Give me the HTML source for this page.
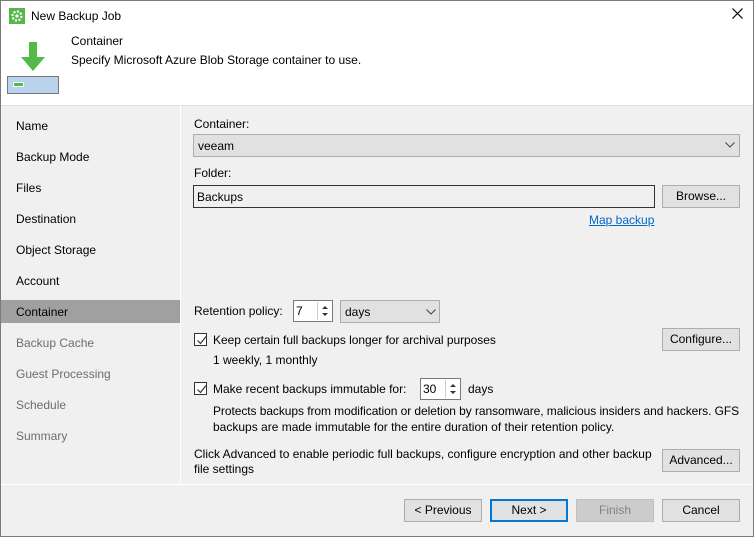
<!DOCTYPE html>
<html><head><style>
*{box-sizing:border-box;margin:0;padding:0}
body{width:754px;height:537px;overflow:hidden;font-family:"Liberation Sans",sans-serif;font-size:12px;color:#000;background:#f0f0f0;position:relative}
.win{position:absolute;left:0;top:0;width:754px;height:537px;border:1px solid #7a7a7a}
.a{position:absolute;white-space:nowrap}
.btn{position:absolute;background:#e1e1e1;border:1px solid #adadad;text-align:center;line-height:21px;height:23px}
.nav{position:absolute;left:16px;line-height:14px}
.g{color:#6d6d6d}
.cb{position:absolute;width:13px;height:13px;border:1px solid #333;background:#fff}
.cb svg{position:absolute;left:1px;top:1px}
.spin{position:absolute;background:#fff;border:1px solid #7a7a7a;height:22px}
.spin .arr{position:absolute;right:1px;top:1px;width:14px;height:18px;border-left:1px solid #ccc}
</style></head><body>
<div class="win"></div>
<div class="a" style="left:1px;top:1px;width:752px;height:104px;background:#fff"></div>
<svg class="a" style="left:9px;top:8px" width="16" height="16"><rect width="16" height="16" fill="#54b948"/><circle cx="8" cy="8" r="4.5" fill="none" stroke="#fff" stroke-width="2.2" stroke-dasharray="2 1.5"/><circle cx="8" cy="8" r="1.6" fill="#fff"/></svg>
<div class="a" style="left:31px;top:9px;font-size:12px">New Backup Job</div>
<svg class="a" style="left:732px;top:8px" width="11" height="11"><path d="M0.5 0.5l10 10M10.5 0.5l-10 10" stroke="#000" stroke-width="1.2"/></svg>
<div class="a" style="left:71px;top:34px">Container</div>
<div class="a" style="left:71px;top:53px">Specify Microsoft Azure Blob Storage container to use.</div>
<svg class="a" style="left:18px;top:42px" width="30" height="30"><path d="M11 0h8v15h8l-12 14-12-14h8z" fill="#54b948"/></svg>
<div class="a" style="left:7px;top:76px;width:52px;height:18px;border:1px solid #777;background:#b9d3ec"></div>
<div class="a" style="left:13px;top:82px;width:11px;height:5px;background:#54b948;border:1px solid #fff"></div>
<div class="a" style="left:1px;top:105px;width:752px;height:1px;background:#ddd"></div>
<div class="a" style="left:180px;top:105px;width:1px;height:380px;background:#fff"></div>
<div class="a" style="left:1px;top:484px;width:752px;height:1px;background:#fff"></div>
<div class="nav" style="top:119px">Name</div>
<div class="nav" style="top:150px">Backup Mode</div>
<div class="nav" style="top:181px">Files</div>
<div class="nav" style="top:212px">Destination</div>
<div class="nav" style="top:243px">Object Storage</div>
<div class="nav" style="top:274px">Account</div>
<div class="a" style="left:1px;top:300px;width:179px;height:23px;background:#a0a0a0"></div>
<div class="nav" style="top:305px">Container</div>
<div class="nav g" style="top:336px">Backup Cache</div>
<div class="nav g" style="top:367px">Guest Processing</div>
<div class="nav g" style="top:398px">Schedule</div>
<div class="nav g" style="top:429px">Summary</div>

<div class="a" style="left:194px;top:117px">Container:</div>
<div class="a" style="left:193px;top:134px;width:547px;height:23px;background:#e1e1e1;border:1px solid #adadad"></div>
<div class="a" style="left:198px;top:139px">veeam</div>
<svg class="a" style="left:725px;top:142px" width="10" height="6"><path d="M0.5 0.5l4.5 4.5 4.5-4.5" fill="none" stroke="#444"/></svg>
<div class="a" style="left:194px;top:166px">Folder:</div>
<div class="a" style="left:193px;top:185px;width:462px;height:23px;background:#f0f0f0;border:1px solid #333"></div>
<div class="a" style="left:197px;top:190px">Backups</div>
<div class="btn" style="left:662px;top:185px;width:78px">Browse...</div>
<div class="a" style="left:589px;top:213px;color:#0066cc;text-decoration:underline">Map backup</div>

<div class="a" style="left:194px;top:304px">Retention policy:</div>
<div class="spin" style="left:293px;top:300px;width:40px"><span class="a" style="left:2px;top:3px">7</span><div class="arr"><svg width="14" height="18"><path d="M4 7l3-3 3 3z M4 11l3 3 3-3z" fill="#333"/></svg></div></div>
<div class="a" style="left:340px;top:300px;width:100px;height:23px;background:#e1e1e1;border:1px solid #adadad"></div>
<div class="a" style="left:345px;top:305px">days</div>
<svg class="a" style="left:426px;top:309px" width="10" height="6"><path d="M0.5 0.5l4.5 4.5 4.5-4.5" fill="none" stroke="#444"/></svg>

<div class="cb" style="left:194px;top:333px"><svg width="11" height="11"><path d="M1.5 5.5l3 3 5.5-7" fill="none" stroke="#333" stroke-width="1.2"/></svg></div>
<div class="a" style="left:213px;top:333px;letter-spacing:-0.05px">Keep certain full backups longer for archival purposes</div>
<div class="a" style="left:213px;top:353px">1 weekly, 1 monthly</div>
<div class="btn" style="left:662px;top:328px;width:78px">Configure...</div>

<div class="cb" style="left:194px;top:382px"><svg width="11" height="11"><path d="M1.5 5.5l3 3 5.5-7" fill="none" stroke="#333" stroke-width="1.2"/></svg></div>
<div class="a" style="left:213px;top:382px">Make recent backups immutable for:</div>
<div class="spin" style="left:420px;top:378px;width:41px"><span class="a" style="left:2px;top:3px">30</span><div class="arr"><svg width="14" height="18"><path d="M4 7l3-3 3 3z M4 11l3 3 3-3z" fill="#333"/></svg></div></div>
<div class="a" style="left:468px;top:382px">days</div>
<div class="a" style="left:213px;top:404px;letter-spacing:-0.07px">Protects backups from modification or deletion by ransomware, malicious insiders and hackers. GFS</div>
<div class="a" style="left:213px;top:420px">backups are made immutable for the entire duration of their retention policy.</div>

<div class="a" style="left:194px;top:447px">Click Advanced to enable periodic full backups, configure encryption and other backup</div>
<div class="a" style="left:194px;top:462px">file settings</div>
<div class="btn" style="left:662px;top:449px;width:78px">Advanced...</div>

<div class="btn" style="left:404px;top:499px;width:78px">&lt; Previous</div>
<div class="btn" style="left:490px;top:499px;width:78px;border:2px solid #0078d7;line-height:19px">Next &gt;</div>
<div class="btn" style="left:576px;top:499px;width:78px;background:#ccc;border-color:#bfbfbf;color:#838383">Finish</div>
<div class="btn" style="left:662px;top:499px;width:78px">Cancel</div>
</body></html>
